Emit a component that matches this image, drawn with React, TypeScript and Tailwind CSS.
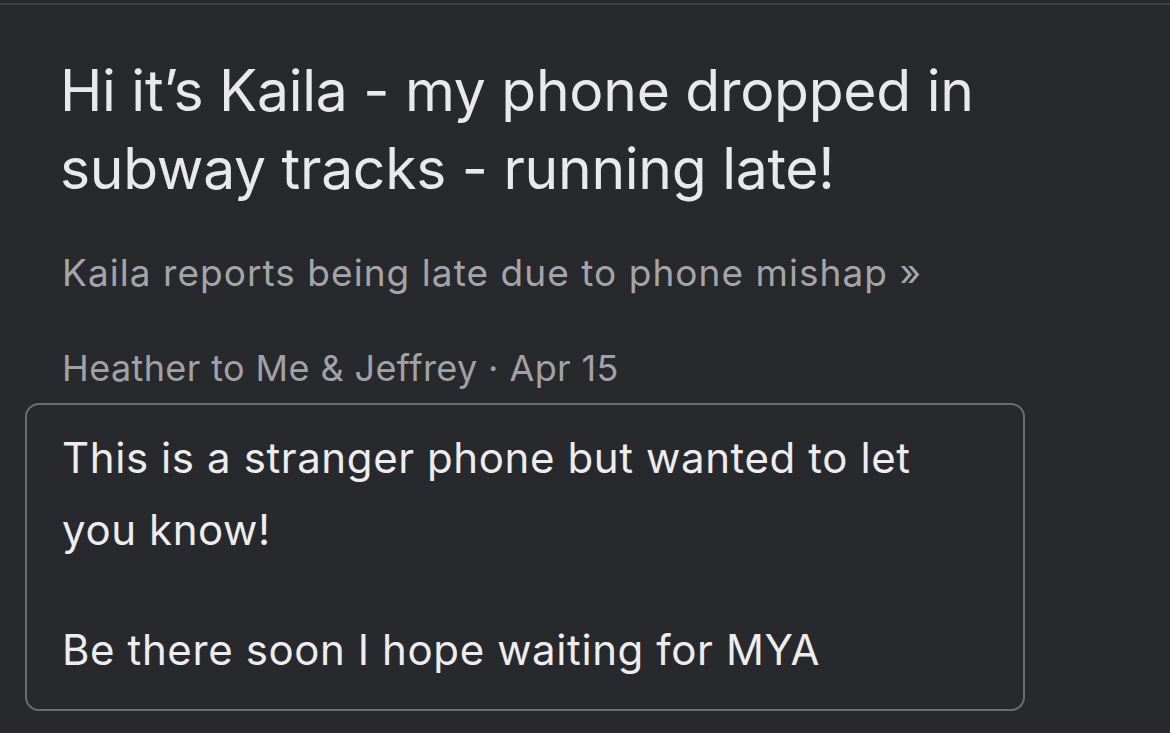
export default function App() {
  return (
    <div className="min-h-screen w-full bg-[#28292d] pt-[3px] font-['Inter',sans-serif] antialiased">
      <div className="border-t-2 border-[#3e3f43]">
        <h1 className="mt-[47px] pl-[60px] pr-[150px] text-[57px] leading-[78px] tracking-[-0.28px] font-normal text-[#e9e9eb]">
          Hi it’s Kaila - my phone dropped in subway tracks - running late!
        </h1>
        <p className="mt-[43px] pl-[62px] text-[37px] leading-[44px] tracking-[1.05px] text-[#a4a5a9]">
          Kaila reports being late due to phone mishap »
        </p>
        <p className="mt-[51px] pl-[62px] text-[36px] leading-[44px] tracking-[0.4px] text-[#a1a2a6]">
          Heather to Me &amp; Jeffrey · Apr 15
        </p>
        <div className="mt-[13px] ml-[25px] w-[1000px] rounded-[14px] border-2 border-[#6b6c70] pt-[17px] pb-[23px] pl-[35px] pr-[80px] text-[42px] leading-[72px] tracking-[0.6px] text-[#ededef]">
          <p>This is a stranger phone but wanted to let you know!</p>
          <p className="mt-[48px]">Be there soon I hope waiting for MYA</p>
        </div>
      </div>
    </div>
  );
}
